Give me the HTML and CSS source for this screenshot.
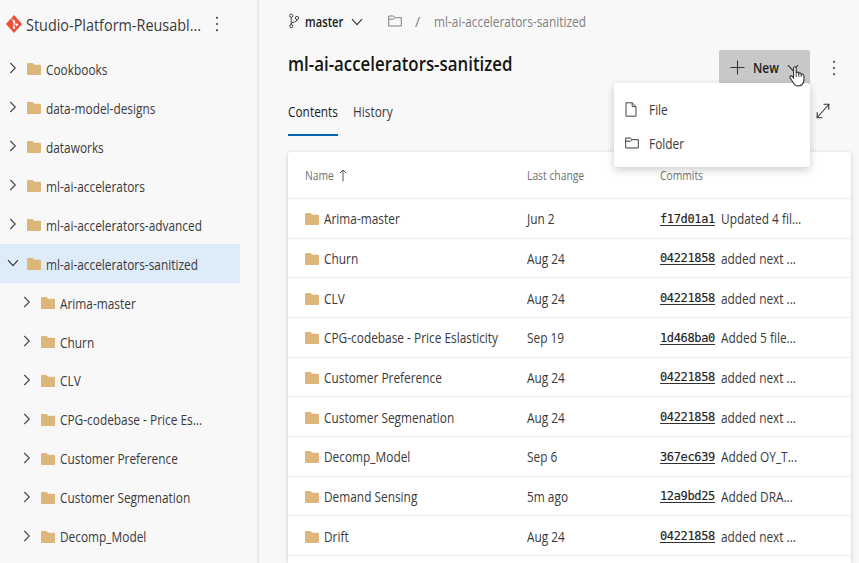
FILE: index.html
```
<!DOCTYPE html>
<html lang="en">
<head>
<meta charset="utf-8">
<title>ml-ai-accelerators-sanitized</title>
<link rel="stylesheet" href="styles.css">
</head>
<body>
<svg width="0" height="0" class="defs">
  <symbol id="folder" viewBox="0 0 14 12"><path d="M0 1Q0 0 1 0H5.3Q6 0 6.4.7L7 1.7H13Q14 1.7 14 2.7V11Q14 12 13 12H1Q0 12 0 11Z" fill="#dcb67a"/></symbol>
  <symbol id="right" viewBox="0 0 8 14"><path d="M1.3 2 6.3 7 1.3 12" fill="none" stroke="#444" stroke-width="1.1"/></symbol>
  <symbol id="down" viewBox="0 0 12 8"><path d="M1 1.2 6 6.6 11 1.2" fill="none" stroke="#333" stroke-width="1.1"/></symbol>
  <symbol id="outline" viewBox="0 0 14 12"><path d="M.7 11V1H5.5L7 2.7H13.3V11ZM.7 4.2H5.4L7 2.7" fill="none" stroke="currentColor" stroke-width="1"/></symbol>
  <symbol id="dots" viewBox="0 0 4 16"><g fill="#333"><circle cx="2" cy="1.7" r="1"/><circle cx="2" cy="8" r="1"/><circle cx="2" cy="14.3" r="1"/></g></symbol>
</svg>
<div class="app">
  <aside class="sidebar">
    <header class="repo">
      <svg class="git" viewBox="0 0 16 18"><path d="M8 .8 15.2 9 8 17.2.8 9Z" fill="#ee513b" stroke="#ee513b" stroke-width="1.2" stroke-linejoin="round"/><path d="M5.7 3.6 8 6.4V13M8 7.4 10.6 10" stroke="#fff" stroke-width="1" fill="none"/><circle cx="8" cy="6.4" r="1.2" fill="#fff"/><circle cx="8" cy="12.7" r="1.2" fill="#fff"/><circle cx="10.8" cy="9.8" r="1.2" fill="#fff"/></svg>
      <span class="repo-name">Studio-Platform-Reusabl...</span>
      <svg class="dots"><use href="#dots"/></svg>
    </header>
    <nav>
      <div class="node"><svg class="chev"><use href="#right"/></svg><svg class="folder"><use href="#folder"/></svg><span>Cookbooks</span></div>
      <div class="node"><svg class="chev"><use href="#right"/></svg><svg class="folder"><use href="#folder"/></svg><span>data-model-designs</span></div>
      <div class="node"><svg class="chev"><use href="#right"/></svg><svg class="folder"><use href="#folder"/></svg><span>dataworks</span></div>
      <div class="node"><svg class="chev"><use href="#right"/></svg><svg class="folder"><use href="#folder"/></svg><span>ml-ai-accelerators</span></div>
      <div class="node"><svg class="chev"><use href="#right"/></svg><svg class="folder"><use href="#folder"/></svg><span>ml-ai-accelerators-advanced</span></div>
      <div class="node selected"><svg class="chev open"><use href="#down"/></svg><svg class="folder"><use href="#folder"/></svg><span>ml-ai-accelerators-sanitized</span></div>
      <div class="node child"><svg class="chev"><use href="#right"/></svg><svg class="folder"><use href="#folder"/></svg><span>Arima-master</span></div>
      <div class="node child"><svg class="chev"><use href="#right"/></svg><svg class="folder"><use href="#folder"/></svg><span>Churn</span></div>
      <div class="node child"><svg class="chev"><use href="#right"/></svg><svg class="folder"><use href="#folder"/></svg><span>CLV</span></div>
      <div class="node child"><svg class="chev"><use href="#right"/></svg><svg class="folder"><use href="#folder"/></svg><span>CPG-codebase - Price Es...</span></div>
      <div class="node child"><svg class="chev"><use href="#right"/></svg><svg class="folder"><use href="#folder"/></svg><span>Customer Preference</span></div>
      <div class="node child"><svg class="chev"><use href="#right"/></svg><svg class="folder"><use href="#folder"/></svg><span>Customer Segmenation</span></div>
      <div class="node child"><svg class="chev"><use href="#right"/></svg><svg class="folder"><use href="#folder"/></svg><span>Decomp_Model</span></div>
    </nav>
  </aside>
  <main class="main">
    <div class="crumbs">
      <svg class="branch" viewBox="0 0 12 16"><g fill="none" stroke="#444" stroke-width="1"><circle cx="3.2" cy="2.7" r="1.6"/><circle cx="3.2" cy="13.2" r="1.6"/><circle cx="9" cy="5" r="1.6"/><path d="M3.2 4.3V11.6M9 6.6Q9 9 6.2 9 3.2 9 3.2 11.6"/></g></svg>
      <b class="branch-name">master</b>
      <svg class="down"><use href="#down"/></svg>
      <svg class="root"><use href="#outline"/></svg>
      <i class="slash">/</i>
      <span class="path">ml-ai-accelerators-sanitized</span>
    </div>
    <div class="title-row">
      <h1>ml-ai-accelerators-sanitized</h1>
      <div class="new">
        <svg class="plus" viewBox="0 0 16 16"><path d="M8 .5V15.5M.5 8H15.5" stroke="#333" stroke-width="1.1"/></svg>
        <b>New</b>
        <svg class="down"><use href="#down"/></svg>
        <svg class="hand" viewBox="0 0 16 21"><path d="M4.6 12V2.3Q4.6.8 5.9.8 7.2.8 7.2 2.3V7Q7.5 6 8.5 6.1 9.7 6.2 9.8 7.5 10.2 6.7 11.1 6.9 12.2 7.1 12.3 8.4 12.7 7.8 13.5 8 14.9 8.4 14.9 10V14Q14.9 17 13 18.5 11.5 20 9 20 6.3 20 4.8 17.5L1.2 12Q.5 10.7 1.5 10 2.6 9.4 3.5 10.7Z" fill="#fff" stroke="#333" stroke-width="1.1"/><path d="M7.2 7V11M9.8 7.5V11M12.3 8.4V11" stroke="#333" stroke-width=".9"/></svg>
        <div class="menu">
          <div class="item"><svg class="file" viewBox="0 0 12 15"><path d="M1 .8H7.2L11 4.6V14.2H1ZM7.2.8V4.6H11" fill="none" stroke="#444"/></svg><span>File</span></div>
          <div class="item"><svg class="root"><use href="#outline"/></svg><span>Folder</span></div>
        </div>
      </div>
      <svg class="dots"><use href="#dots"/></svg>
    </div>
    <div class="tabs">
      <div class="tab active"><span>Contents</span></div>
      <div class="tab"><span>History</span></div>
      <svg class="expand" viewBox="0 0 14 16"><path d="M1.2 14.5 12.8 1.5M7.6 1.3H12.8V6.7M1.2 9.3V14.7H6.4" fill="none" stroke="#333" stroke-width="1.1"/></svg>
    </div>
    <section class="card">
      <div class="row head"><div class="name"><span>Name</span><svg class="up" viewBox="0 0 8 13"><path d="M4 12.5V1M1 4 4 1 7 4" fill="none" stroke="#555"/></svg></div><span>Last change</span><span>Commits</span></div>
      <div class="row"><div class="name"><svg class="folder"><use href="#folder"/></svg><span>Arima-master</span></div><span>Jun 2</span><div class="commit"><a>f17d01a1</a><span>Updated 4 fil...</span></div></div>
      <div class="row"><div class="name"><svg class="folder"><use href="#folder"/></svg><span>Churn</span></div><span>Aug 24</span><div class="commit"><a>04221858</a><span>added next ...</span></div></div>
      <div class="row"><div class="name"><svg class="folder"><use href="#folder"/></svg><span>CLV</span></div><span>Aug 24</span><div class="commit"><a>04221858</a><span>added next ...</span></div></div>
      <div class="row"><div class="name"><svg class="folder"><use href="#folder"/></svg><span>CPG-codebase - Price Eslasticity</span></div><span>Sep 19</span><div class="commit"><a>1d468ba0</a><span>Added 5 file...</span></div></div>
      <div class="row"><div class="name"><svg class="folder"><use href="#folder"/></svg><span>Customer Preference</span></div><span>Aug 24</span><div class="commit"><a>04221858</a><span>added next ...</span></div></div>
      <div class="row"><div class="name"><svg class="folder"><use href="#folder"/></svg><span>Customer Segmenation</span></div><span>Aug 24</span><div class="commit"><a>04221858</a><span>added next ...</span></div></div>
      <div class="row"><div class="name"><svg class="folder"><use href="#folder"/></svg><span>Decomp_Model</span></div><span>Sep 6</span><div class="commit"><a>367ec639</a><span>Added OY_T...</span></div></div>
      <div class="row"><div class="name"><svg class="folder"><use href="#folder"/></svg><span>Demand Sensing</span></div><span>5m ago</span><div class="commit"><a>12a9bd25</a><span>Added DRA...</span></div></div>
      <div class="row"><div class="name"><svg class="folder"><use href="#folder"/></svg><span>Drift</span></div><span>Aug 24</span><div class="commit"><a>04221858</a><span>added next ...</span></div></div>
    </section>
  </main>
</div>
</body>
</html>
```
FILE: styles.css
```
* { box-sizing: border-box; }
body { margin: 0; height: 563px; overflow: hidden; background: #f8f8f8; color: #3a3a3a; font: 14px/20px "Open Sans", "Noto Sans", sans-serif; white-space: nowrap; }
svg { flex: none; display: block; }
/* Narrow the UI typeface */
span, b, h1 { display: block; transform: scaleX(.848); transform-origin: left; }
.defs { position: absolute; }
.app { display: flex; height: 563px; }
.sidebar { width: 259px; border-right: 2px solid #e7e7e7; flex: none; }
.repo { height: 49px; padding: 0 0 1px 6px; display: flex; align-items: center; }
.git { width: 16px; height: 18px; }
.repo-name { width: 186px; margin-left: 4px; font-size: 17px; padding-top: 2px; }
.dots { width: 4px; height: 16px; }
.repo .dots { margin-left: 3px; }
.node { display: flex; align-items: center; height: 38.95px; width: 240px; padding: 2px 0 0 8px; }
.node span { margin-top: 1px; }
.child { padding-left: 22px; }
.selected { background: #deebf9; }
.chev { width: 8px; height: 14px; margin: -2px 10px 0 1px; }
.chev.open { width: 12px; height: 8px; margin: -2px 8px 0 -1px; }
.folder { width: 14px; height: 12px; margin-right: 5px; }
.main { flex: 1; padding-left: 29px; min-width: 0; }
.crumbs { height: 43px; display: flex; align-items: center; color: #808080; }
.branch { width: 12px; height: 16px; margin: -2px 5px 0 0; }
b { font-weight: 600; color: #1c1c1c; }
.branch-name { width: 46px; transform: scaleX(.8); }
.down { width: 12px; height: 8px; }
.root { width: 14px; height: 12px; }
.crumbs .root { margin-left: 25px; margin-top: -2px; }
.slash { margin: 0 14px 0 13px; font-style: normal; }
.title-row { display: flex; height: 51px; align-items: center; }
h1 { margin: -10px 0 0; width: 431px; font-size: 20px; line-height: 28px; font-weight: 600; color: #151515; transform: scaleX(.842); }
.new { position: relative; width: 91px; height: 34px; margin-top: -3px; background: #c8c8c8; border-radius: 2px 2px 0 0; display: flex; align-items: center; padding: 1px 0 0 11px; }
.plus { width: 15px; height: 15px; margin: -1px 8px 0 0; }
.new b { width: 34px; margin-top: 1px; }
.hand { position: absolute; left: 70px; top: 16px; width: 16px; height: 21px; z-index: 3; }
.menu { position: absolute; right: 0; top: 33px; width: 196px; height: 84px; padding-top: 10px; background: #fff; border-radius: 3px; box-shadow: 0 3px 9px #0003; z-index: 2; }
.item { height: 34px; display: flex; align-items: center; padding-left: 11px; }
.item span { margin-left: 10px; }
.item .file { width: 12px; height: 15px; margin: -2px 2px 0 0; }
.item .root { margin-top: -2px; }
.title-row .dots { margin-left: 22px; margin-top: -2px; }
.tabs { display: flex; height: 58px; }
.tab { height: 42px; padding-top: 8px; margin-right: 15px; }
.active { border-bottom: 2px solid #0067b8; color: #1a1a1a; font-weight: 500; width: 50px; }
.expand { width: 14px; height: 16px; margin: 9px 29px 0 auto; }
.card { width: 563px; height: 411px; overflow: hidden; background: #fff; border-radius: 3px 3px 0 0; box-shadow: 0 1px 4px #0003; }
.row { display: grid; grid-template-columns: 222px 133px 1fr; align-items: center; height: 39.67px; padding: 2px 0 0 17px; border-bottom: 1.5px solid #eee; }
.head { height: 47px; font-size: 12px; color: #707070; }
.head span { transform: scaleX(.86); }
.name { display: flex; align-items: center; }
.up { width: 8px; height: 13px; margin: -2px 0 0 0; }
.commit { display: flex; align-items: center; }
.commit a { width: 55px; margin: 0 6px 0 0; font: 12px/12px "DejaVu Sans Mono", monospace; letter-spacing: -.35px; color: #222; -webkit-text-stroke: .15px #222; border-bottom: 1.5px solid #333; }
```
